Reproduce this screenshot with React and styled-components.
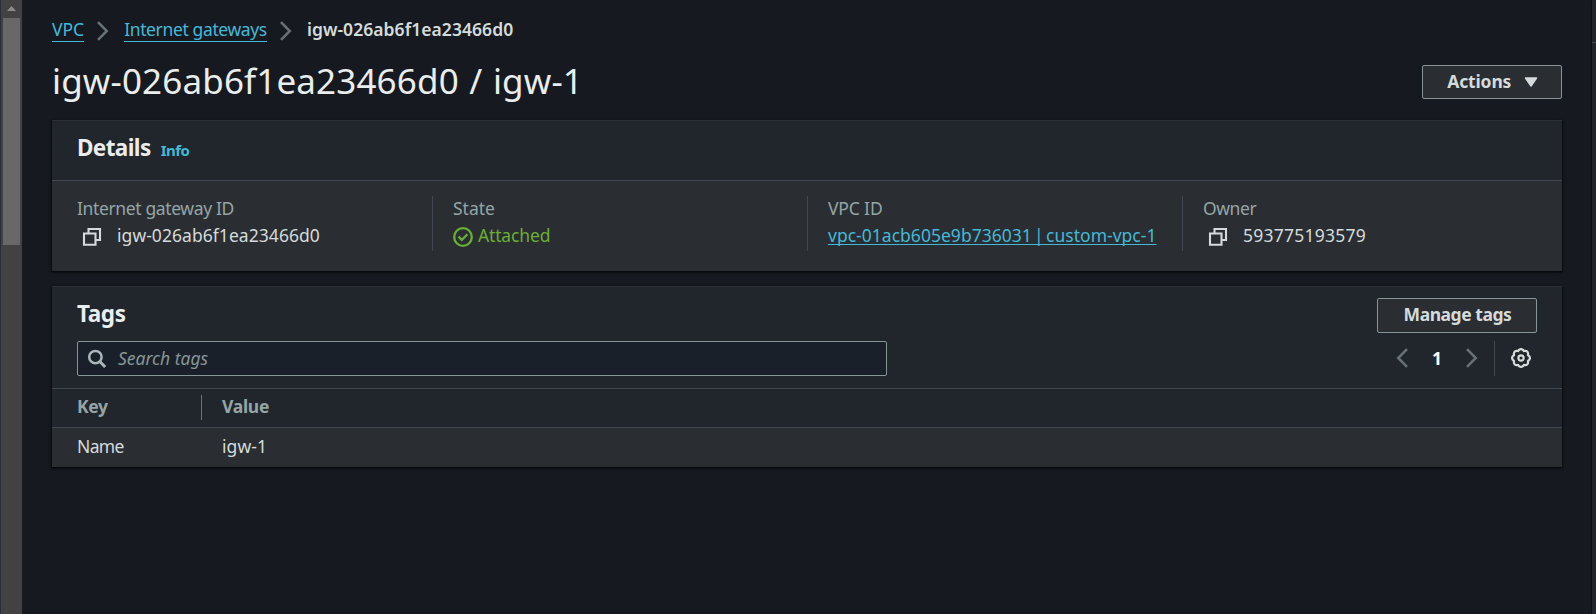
import React from "react";
import styled, { createGlobalStyle, css } from "styled-components";

const GlobalStyle = createGlobalStyle`
  * { box-sizing: border-box; }
  body {
    margin: 0;
    background: #161a20;
    color: #d5dbdb;
    font-family: "Noto Sans", "Open Sans", sans-serif;
    font-size: 17.5px;
    line-height: 24px;
    overflow: hidden;
  }
  h1, h2 { margin: 0; }
`;

const Page = styled.div`
  display: flex;
  height: 614px;
`;

const Scrollbar = styled.div`
  flex: 0 0 22px;
  display: flex;
  flex-direction: column;
  border-left: 1px solid #2a2e33;
  padding: 0 2px;
  background: #424242;
`;

const ScrollArrow = styled.svg`
  width: 17px;
  height: 18px;
`;

const ScrollThumb = styled.div`
  width: 17px;
  height: 227px;
  background: #686868;
`;

const Content = styled.main`
  flex: 1;
  padding: 16px 30px 0;
`;

const SidePanel = styled.aside`
  flex: 0 0 4px;
  background: #21252b;
  box-shadow: -1px 0 1px #0c0e12;
`;

const SidePanelHeader = styled.div`
  height: 43px;
  border-bottom: 1px solid #414750;
`;

const Text = styled.span`
  display: inline-block;
  white-space: pre;
  letter-spacing: ${({ $track = 0 }) => $track}px;
  word-spacing: ${({ $gap = 0 }) => $gap}px;
`;

const Breadcrumbs = styled.nav`
  display: flex;
  align-items: center;
  height: 26px;
`;

const Crumb = styled(Text)`
  height: 25px;
  margin-top: 1px;
  color: #44b9d6;
  border-bottom: 1px solid #44b9d6;
`;

const CurrentCrumb = styled(Text)`
  font-weight: 600;
`;

const CrumbArrow = styled.svg`
  width: 12px;
  height: 20px;
  margin: 4px 15px 0 13px;
`;

const TitleRow = styled.header`
  display: flex;
  justify-content: space-between;
  align-items: center;
  height: 40px;
  margin-top: 20px;
`;

const Title = styled.h1`
  margin-bottom: 3px;
  font-size: 35px;
  line-height: 44px;
  font-weight: 400;
  color: #eaeded;
`;

const Button = styled.button`
  display: flex;
  align-items: center;
  justify-content: center;
  gap: 12.5px;
  width: ${({ $width }) => $width}px;
  height: ${({ $height }) => $height}px;
  padding: 0 0 3px 1px;
  border: 1px solid #879596;
  border-radius: 2px;
  background: #2a2e33;
  color: #d5dbdb;
  font: inherit;
  font-weight: 700;
`;

const Caret = styled.svg`
  width: 14px;
  height: 12px;
  margin-top: 3px;
`;

const Card = styled.section`
  margin-top: ${({ $top }) => $top}px;
  border-top: 1px solid #2c3035;
  background: #21252c;
  box-shadow: 0 1px 1px #08090c, 1px 1px 2px #0c0e12, -1px 1px 2px #0c0e12;
`;

const CardHeader = styled.div`
  display: flex;
  align-items: baseline;
  gap: 10px;
  height: 60px;
  padding: 13px 25px 0;
  border-bottom: 1px solid #414750;
`;

const Heading = styled.h2`
  font-size: 22.5px;
  line-height: 28px;
  font-weight: 700;
  color: #eaeded;
`;

const InfoLink = styled(Text)`
  font-size: 15px;
  font-weight: 700;
  color: #44b9d6;
`;

const Columns = styled.div`
  display: grid;
  grid-template-columns: 355px 375px 375px 1fr;
  height: 90px;
  padding: 15px 25px 19px;
  background: #2a2e33;
`;

const Field = styled.div`
  height: 55px;
  ${({ $divided }) => $divided && css`
    padding-left: 20px;
    border-left: 1px solid #414750;
  `}
`;

const Label = styled.div`
  height: 27px;
  color: #95a5a6;
`;

const Value = styled.div`
  display: flex;
  align-items: center;
  height: 24px;
  color: ${({ $color = "#d5dbdb" }) => $color};
`;

const ValueLink = styled(Text)`
  color: #44b9d6;
  text-decoration: underline;
  text-decoration-thickness: 1px;
  text-underline-offset: 2px;
  text-decoration-skip-ink: none;
`;

const Glyph = styled.svg`
  flex: none;
  width: 20px;
  height: 20px;
  margin: ${({ $margin = "0" }) => $margin};
`;

const Toolbar = styled.div`
  display: flex;
  justify-content: space-between;
  align-items: center;
  padding: 0 25px;
`;

const TagsHeader = styled(Toolbar)`
  height: 54px;
  padding-top: 3px;

  ${Heading} {
    margin-bottom: 4px;
  }
`;

const FilterRow = styled(Toolbar)`
  height: 48px;
  align-items: flex-start;
  border-bottom: 1px solid #414750;
`;

const SearchBox = styled.div`
  display: flex;
  align-items: center;
  width: 810px;
  height: 35px;
  padding-bottom: 2px;
  border: 1px solid #879596;
  border-radius: 2px;
  background: #1a2029;
  color: #879596;
  font-style: italic;
`;

const Pager = styled.div`
  display: flex;
  align-items: center;
  height: 34px;
`;

const PageNumber = styled(Text)`
  width: 12px;
  margin: 0 23px 1px;
  text-align: center;
  font-weight: 700;
  color: #ffffff;
`;

const PagerArrow = styled.svg`
  width: 12px;
  height: 20px;
`;

const PagerDivider = styled.div`
  width: 1px;
  height: 35px;
  margin: 0 16px;
  background: #414750;
`;

const TableRow = styled.div`
  display: grid;
  grid-template-columns: 124px 1fr;
  height: 39px;
  padding: ${({ $head }) => ($head ? 6 : 7)}px 25px 0;
  background: ${({ $head }) => ($head ? "#21252c" : "#2a2e33")};
  ${({ $head }) => $head && css`
    border-bottom: 1px solid #414750;
    color: #95a5a6;
    font-weight: 700;
  `}
`;

const Cell = styled.div`
  height: 25px;
  line-height: 22px;
  padding-left: ${({ $pad = 0 }) => $pad}px;
  border-left: ${({ $divided }) => ($divided ? "1px solid #687078" : "0")};
`;

const CopyIcon = () => (
  <Glyph viewBox="0 0 20 20" $margin="4px 15px 0 5px" fill="none" stroke="#d5dbdb" strokeWidth="2.1">
    <path d="M2 6.5h11.5v11.3H2z M6.5 6.5V2H18v11h-4.5" />
  </Glyph>
);

const StatusIcon = () => (
  <Glyph viewBox="0 0 20 20" $margin="4px 5px 0 0" fill="none" stroke="#6aaf35" strokeWidth="2.3">
    <circle cx="10" cy="10" r="8.8" />
    <path d="M5.5 9.6l3.3 3.2 5.7-5.6" />
  </Glyph>
);

const SearchIcon = () => (
  <Glyph viewBox="0 0 20 20" $margin="2px 11px 0 9px" fill="none" stroke="#aab7b8" strokeWidth="2.5">
    <circle cx="8.4" cy="8.1" r="6.2" />
    <path d="M13 12.8l5.2 5.2" strokeWidth="3" />
  </Glyph>
);

// Scalloped outline with eight lobes.
const gear = Array.from({ length: 96 }, (_, i) => {
  const a = (i / 96) * Math.PI * 2;
  const r = 7.5 + 1.4 * Math.abs(Math.cos(4 * a));
  return `${(10 + r * Math.sin(a)).toFixed(2)},${(10 - r * Math.cos(a)).toFixed(2)}`;
}).join(" ");

const GearIcon = () => (
  <Glyph viewBox="0 0 20 20" $margin="0 6px 0 0" fill="none" stroke="#d5dbdb" strokeWidth="2.2">
    <polygon points={gear} strokeLinejoin="round" />
    <circle cx="10" cy="10" r="2.6" />
  </Glyph>
);

const Chevron = ({ as: Tag, left }) => (
  <Tag viewBox="0 0 12 20" fill="none" stroke="#687078" strokeWidth="2.5">
    <path d={left ? "M11 1.2L2.2 10l8.8 8.8" : "M1 1.2L9.8 10 1 18.8"} />
  </Tag>
);

export default function App() {
  return (
    <>
      <GlobalStyle />
      <Page>
        <Scrollbar>
          <ScrollArrow viewBox="0 0 17 18">
            <path d="M4 11l4.5-5 4.5 5z" fill="#8b8b8b" />
          </ScrollArrow>
          <ScrollThumb />
        </Scrollbar>
        <Content>
          <Breadcrumbs>
            <Crumb>VPC</Crumb>
            <Chevron as={CrumbArrow} />
            <Crumb $track={-0.37}>Internet gateways</Crumb>
            <Chevron as={CrumbArrow} />
            <CurrentCrumb $track={0.05}>igw-026ab6f1ea23466d0</CurrentCrumb>
          </Breadcrumbs>
          <TitleRow>
            <Title><Text $track={0.15} $gap={1.2}>igw-026ab6f1ea23466d0 / igw-1</Text></Title>
            <Button $width={140} $height={34}>
              <Text $track={-0.15}>Actions</Text>
              <Caret viewBox="0 0 14 12">
                <path d="M1.5 2h11L7 10z" fill="#d5dbdb" stroke="#d5dbdb" strokeLinejoin="round" strokeWidth="1.5" />
              </Caret>
            </Button>
          </TitleRow>
          <Card $top={18}>
            <CardHeader>
              <Heading><Text $track={-0.6}>Details</Text></Heading>
              <InfoLink $track={-0.5}>Info</InfoLink>
            </CardHeader>
            <Columns>
              <Field>
                <Label><Text $track={-0.37}>Internet gateway ID</Text></Label>
                <Value><CopyIcon /><Text $track={0.05}>igw-026ab6f1ea23466d0</Text></Value>
              </Field>
              <Field $divided>
                <Label><Text>State</Text></Label>
                <Value $color="#6aaf35"><StatusIcon /><Text $track={-0.15}>Attached</Text></Value>
              </Field>
              <Field $divided>
                <Label><Text $track={-0.15}>VPC ID</Text></Label>
                <Value><ValueLink $track={0.02} $gap={-2.3}>vpc-01acb605e9b736031 | custom-vpc-1</ValueLink></Value>
              </Field>
              <Field $divided>
                <Label><Text $track={-0.4}>Owner</Text></Label>
                <Value><CopyIcon /><Text $track={0.25}>593775193579</Text></Value>
              </Field>
            </Columns>
          </Card>
          <Card $top={15}>
            <TagsHeader>
              <Heading><Text $track={-0.4}>Tags</Text></Heading>
              <Button $width={160} $height={35}><Text $track={-0.46}>Manage tags</Text></Button>
            </TagsHeader>
            <FilterRow>
              <SearchBox><SearchIcon /><Text>Search tags</Text></SearchBox>
              <Pager>
                <Chevron as={PagerArrow} left />
                <PageNumber>1</PageNumber>
                <Chevron as={PagerArrow} />
                <PagerDivider />
                <GearIcon />
              </Pager>
            </FilterRow>
            <TableRow $head>
              <Cell><Text $track={-0.3}>Key</Text></Cell>
              <Cell $divided $pad={20}><Text $track={-0.3}>Value</Text></Cell>
            </TableRow>
            <TableRow>
              <Cell><Text $track={-0.65}>Name</Text></Cell>
              <Cell $pad={21}><Text $track={0.1}>igw-1</Text></Cell>
            </TableRow>
          </Card>
        </Content>
        <SidePanel><SidePanelHeader /></SidePanel>
      </Page>
    </>
  );
}
